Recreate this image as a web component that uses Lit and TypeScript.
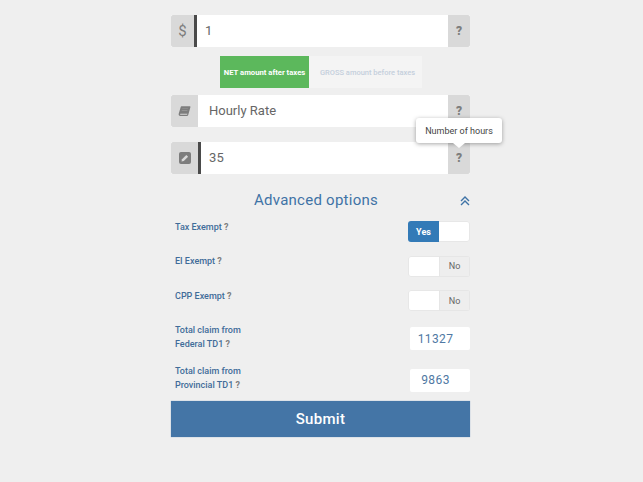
import { LitElement, html, css, svg } from "lit";
import { customElement } from "lit/decorators.js";

const book = svg`<svg width="13" height="13" viewBox="0 0 13 13"><path fill="#7d7d7d" d="M3.4 1.2h8.2c.7 0 1 .5.8 1.1l-2.2 7.6c-.2.7-.6 1-1.3 1H2.2C1.1 10.900.4 10 .7 8.800L2.800 1.800c.1-.4.300-.6.600-.6z"/><path fill="#d9d9d9" d="M2.300 8.700h7.100l-.3 1H2.100z"/><path fill="#9a9a9a" d="M4.300 3.400h5.700l-.2.700H4.100zM3.800 5h5.700l-.2.700H3.600z"/></svg>`;
const edit = svg`<svg width="12" height="12" viewBox="0 0 12 12"><rect width="12" height="12" rx="2" fill="#7d7d7d"/><path fill="#d9d9d9" d="M2.500 9.500l.5-2.300 4.300-4.300 1.800 1.800-4.300 4.300z"/></svg>`;
const chevrons = svg`<svg width="10" height="10" viewBox="0 0 10 10" fill="none" stroke="#3f73a6" stroke-width="1.4"><path d="M1 5l4-4 4 4M1 9l4-4 4 4"/></svg>`;

@customElement("app-root")
export class AppRoot extends LitElement {
  static styles = css`
    :host { display: block; height: 482px; background: #efefef; font-family: Roboto, "Liberation Sans", sans-serif; overflow: hidden; }
    .wrap { width: 299px; margin-left: 171px; padding-top: 15px; position: relative; }
    .row { display: flex; height: 32px; background: #fff; }
    .ico { width: 27px; flex: none; background: #d9d9d9; border-radius: 2px 0 0 2px; display: flex; align-items: center; justify-content: center; color: #7d7d7d; }
    .ico.dollar { width: 23px; font-size: 15px; font-weight: 400; }
    .bar { width: 3px; flex: none; background: #4a4a4a; }
    .val { flex: 1; display: flex; align-items: center; color: #666; font-size: 13px; letter-spacing: .2px; padding: 0 0 1px 8px; }
    .val.wide { padding-left: 11px; font-size: 13px; letter-spacing: 0; padding-bottom: 2px; }
    .q { width: 22px; flex: none; background: #d9d9d9; border-radius: 0 2px 2px 0; display: flex; align-items: center; justify-content: center; color: #7d7d7d; font-size: 12px; font-weight: 900; }
    .seg { display: flex; margin: 9px 0 7px 49px; height: 32px; }
    .net { width: 89px; background: #5cb85c; color: #fff; font-size: 7.7px; font-weight: 700; display: flex; align-items: center; justify-content: center; white-space: nowrap; }
    .gross { box-sizing: border-box; width: 113px; padding-left: 4px; background: #f4f4f4; color: #c4cfdc; font-size: 7.5px; font-weight: 500; display: flex; align-items: center; justify-content: center; white-space: nowrap; }
    .r3 { margin-top: 15px; }
    .tip { position: absolute; left: 245px; top: 118px; width: 86px; height: 25px; background: #fff; border-radius: 3px; box-shadow: 0 1px 4px rgba(0,0,0,.35); font-size: 9px; color: #444; display: flex; align-items: center; justify-content: center; }
    .tip::after { content: ""; position: absolute; left: 37px; bottom: -5px; border: 6px solid transparent; border-bottom: 0; border-top: 5px solid #fff; }
    .adv { position: relative; height: 20px; margin-top: 16px; color: #3f73a6; font-size: 15px; letter-spacing: .25px; display: flex; align-items: center; justify-content: center; padding-right: 9px; }
    .adv svg { position: absolute; right: 0; top: 6px; }
    .opts { margin-top: 11px; }
    .opt { display: flex; justify-content: space-between; align-items: flex-start; height: 34.500px; padding-left: 4px; }
    .lab { color: #3f6c99; font-size: 9px; font-weight: 500; line-height: 14px; margin-top: -1.500px; }
    .claim .lab { margin-top: -2px; }
    .lab b { color: #7d7d7d; font-weight: 700; }
    .sw { display: flex; width: 62px; height: 21px; box-shadow: inset 0 0 0 1px #e7e7e7; border-radius: 3px; overflow: hidden; background: #fff; font-size: 9px; }
    .sw span { flex: 1; display: flex; align-items: center; justify-content: center; }
    .yes { background: #337ab7; color: #fff; font-weight: 700; }
    .no { background: #eeeeee; color: #666; font-weight: 400; box-shadow: inset 0 0 0 1px #e6e6e6; }
    .claim { display: flex; justify-content: space-between; align-items: flex-start; padding-left: 4px; height: 35px; }
    .claim.first { height: 41.500px; }
    .num { box-sizing: border-box; width: 60px; height: 23px; margin-top: 2.500px; padding-right: 9px; background: #fff; border-radius: 2px; color: #4f78a3; font-size: 12px; letter-spacing: .4px; display: flex; align-items: center; justify-content: center; }
    .sub { height: 36px; background: #4475a6; color: #fff; font-size: 15px; font-weight: 500; display: flex; align-items: center; justify-content: center; letter-spacing: .3px; box-shadow: 0 0 1px #86a6c6; }
  `;
  render() {
    return html`<div class="wrap">
      <div class="row"><div class="ico dollar">$</div><div class="bar"></div><div class="val">1</div><div class="q">?</div></div>
      <div class="seg"><div class="net">NET amount after taxes</div><div class="gross">GROSS amount before taxes</div></div>
      <div class="row"><div class="ico">${book}</div><div class="val wide">Hourly Rate</div><div class="q">?</div></div>
      <div class="row r3"><div class="ico">${edit}</div><div class="bar"></div><div class="val">35</div><div class="q">?</div></div>
      <div class="tip">Number of hours</div>
      <div class="adv">Advanced options ${chevrons}</div>
      <div class="opts">
        <div class="opt"><div class="lab">Tax Exempt <b>?</b></div><div class="sw"><span class="yes">Yes</span><span></span></div></div>
        <div class="opt"><div class="lab">EI Exempt <b>?</b></div><div class="sw"><span></span><span class="no">No</span></div></div>
        <div class="opt"><div class="lab">CPP Exempt <b>?</b></div><div class="sw"><span></span><span class="no">No</span></div></div>
      </div>
      <div class="claim first"><div class="lab">Total claim from<br>Federal TD1 <b>?</b></div><div class="num">11327</div></div>
      <div class="claim"><div class="lab">Total claim from<br>Provincial TD1 <b>?</b></div><div class="num">9863</div></div>
      <div class="sub">Submit</div>
    </div>`;
  }
}
